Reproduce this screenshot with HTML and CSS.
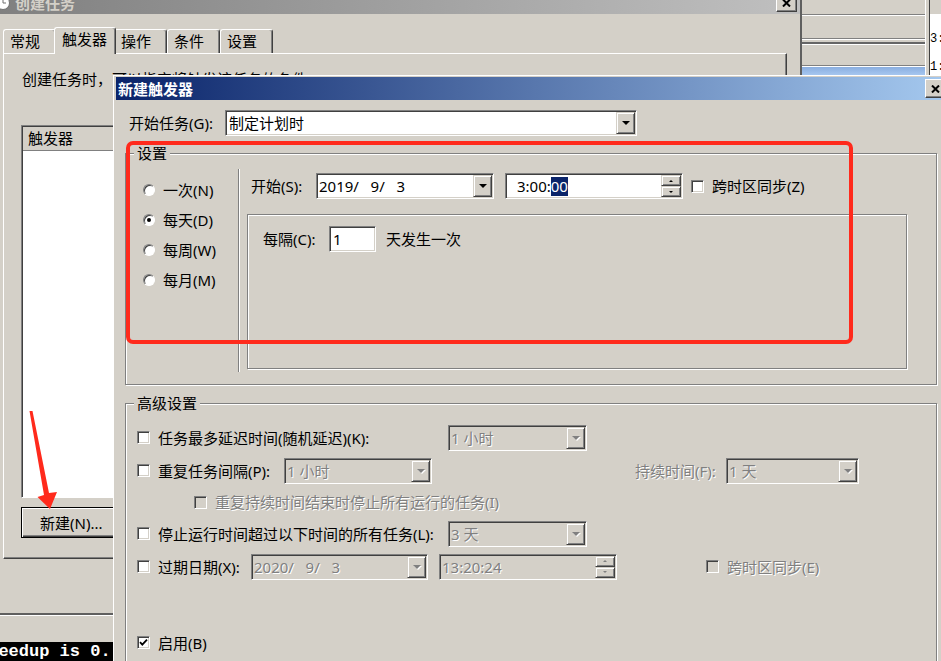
FILE: index.html
```html
<!DOCTYPE html>
<html lang="zh-CN">
<head>
    <meta charset="UTF-8">
    <meta name="viewport" content="width=device-width, initial-scale=1.0">
    <title>新建触发器</title>
    <link rel="stylesheet" href="styles.css">
</head>
<body>
<div class="desk">
    <div class="top-area">
        <!-- back window: 创建任务 -->
        <div class="task-win">
            <div class="win-title">
                <svg class="win-icon" width="16" height="16" viewBox="0 0 16 16">
                    <circle cx="8" cy="8" r="6.5" fill="#fff" stroke="#707070"/>
                    <path d="M8 4 V8 H11" stroke="#707070" fill="none"/>
                </svg>
                <span class="win-title-text">创建任务</span>
                <span class="cap-btn back-close">
                    <svg width="9" height="8" viewBox="0 0 9 8"><path d="M1 0.5 L8 7.5 M8 0.5 L1 7.5" stroke="#000" stroke-width="2"/></svg>
                </span>
            </div>
            <div class="tabs">
                <div class="tab">常规</div>
                <div class="tab on">触发器</div>
                <div class="tab">操作</div>
                <div class="tab">条件</div>
                <div class="tab">设置</div>
            </div>
            <div class="tab-panel">
                <div class="intro">创建任务时，可以指定将触发该任务的条件。</div>
                <div class="list">
                    <div class="list-head">触发器</div>
                </div>
                <div class="btn def new-btn">新建(N)...</div>
            </div>
        </div>

        <!-- window strip on the right -->
        <div class="side-win">
            <div class="side-list">
                <div class="sl-a"></div>
                <div class="sl-b"></div>
                <div class="sl-c"></div>
                <div class="sl-d"></div>
                <div class="sl-e"></div>
            </div>
            <div class="side-edge"></div>
            <div class="side-text">3:
1:</div>
        </div>
    </div>

    <div class="console">
        <div class="console-bar"></div>
        <div class="console-out">Speedup is 0.</div>
    </div>

    <!-- front dialog: 新建触发器 -->
    <div class="trig-win">
        <div class="trig-title">
            <span>新建触发器</span>
            <span class="cap-btn front-close">
                <svg width="9" height="8" viewBox="0 0 9 8"><path d="M1 0.5 L8 7.5 M8 0.5 L1 7.5" stroke="#000" stroke-width="2"/></svg>
            </span>
        </div>

        <div class="trig-body">
            <div class="start-row">
                <span class="lbl lbl-task">开始任务(G):</span>
                <div class="field task-combo">
                    <span class="val">制定计划时</span>
                    <span class="drop"><i class="arrow"></i></span>
                </div>
            </div>

            <div class="group group-set">
                <div class="legend">设置</div>
                <div class="sched">
                    <div class="radios">
                        <div class="radio-row"><span class="rad"></span><span>一次(N)</span></div>
                        <div class="radio-row"><span class="rad on"></span><span>每天(D)</span></div>
                        <div class="radio-row"><span class="rad"></span><span>每周(W)</span></div>
                        <div class="radio-row"><span class="rad"></span><span>每月(M)</span></div>
                    </div>
                    <div class="vsep"></div>
                    <div class="sched-main">
                        <div class="start-line">
                            <span class="lbl lbl-start">开始(S):</span>
                            <div class="field date">
                                <span class="val">2019/   9/   3</span>
                                <span class="drop"><i class="arrow"></i></span>
                            </div>
                            <div class="field time">
                                <span class="val hour-pad">3:00:<span class="sel">00</span></span>
                                <span class="spin">
                                    <span class="spin-b"><i class="up"></i></span>
                                    <span class="spin-b"><i class="down"></i></span>
                                </span>
                            </div>
                            <span class="chk gap-chk"></span>
                            <span class="lbl chk-lbl">跨时区同步(Z)</span>
                        </div>
                        <div class="group sub">
                            <div class="every-row">
                                <span class="lbl lbl-every">每隔(C):</span>
                                <div class="field num"><span class="val num-val">1</span></div>
                                <span class="lbl lbl-times">天发生一次</span>
                            </div>
                        </div>
                    </div>
                </div>
            </div>

            <div class="group group-adv">
                <div class="legend">高级设置</div>
                <div class="adv-rows">
                    <div class="adv-row">
                        <span class="chk"></span>
                        <span class="lbl chk-lbl lbl-long">任务最多延迟时间(随机延迟)(K):</span>
                        <div class="field off combo-s">
                            <span class="val">1 小时</span>
                            <span class="drop"><i class="arrow"></i></span>
                        </div>
                    </div>
                    <div class="adv-row">
                        <span class="chk"></span>
                        <span class="lbl chk-lbl lbl-repeat">重复任务间隔(P):</span>
                        <div class="field off combo-m">
                            <span class="val">1 小时</span>
                            <span class="drop"><i class="arrow"></i></span>
                        </div>
                        <span class="lbl off-text lbl-dur">持续时间(F):</span>
                        <div class="field off combo-d">
                            <span class="val">1 天</span>
                            <span class="drop"><i class="arrow"></i></span>
                        </div>
                    </div>
                    <div class="adv-row short">
                        <span class="chk off indent"></span>
                        <span class="lbl chk-lbl off-text">重复持续时间结束时停止所有运行的任务(I)</span>
                    </div>
                    <div class="adv-row">
                        <span class="chk"></span>
                        <span class="lbl chk-lbl lbl-long">停止运行时间超过以下时间的所有任务(L):</span>
                        <div class="field off combo-s">
                            <span class="val">3 天</span>
                            <span class="drop"><i class="arrow"></i></span>
                        </div>
                    </div>
                    <div class="adv-row">
                        <span class="chk"></span>
                        <span class="lbl chk-lbl lbl-expire">过期日期(X):</span>
                        <div class="field off date-off">
                            <span class="val">2020/   9/   3</span>
                            <span class="drop"><i class="arrow"></i></span>
                        </div>
                        <div class="field off time">
                            <span class="val">13:20:24</span>
                            <span class="spin">
                                <span class="spin-b"><i class="up"></i></span>
                                <span class="spin-b"><i class="down"></i></span>
                            </span>
                        </div>
                        <span class="chk off far-chk"></span>
                        <span class="lbl chk-lbl off-text">跨时区同步(E)</span>
                    </div>
                    <div class="adv-row last">
                        <span class="chk">
                            <svg width="9" height="9" viewBox="0 0 9 9"><path d="M1 4.2 L3.3 6.6 L8 1.6" stroke="#000" stroke-width="1.8" fill="none"/></svg>
                        </span>
                        <span class="lbl chk-lbl">启用(B)</span>
                    </div>
                </div>
            </div>
        </div>
    </div>

    <!-- annotations drawn on top of the screenshot -->
    <div class="mark-box"></div>
    <svg class="mark-arrow" width="70" height="120" viewBox="0 0 70 120">
        <polygon points="29.5,11 32.5,11 49,93 57,92 50,109 37.5,97 44,95" fill="#ff2a1c"/>
    </svg>
</div>
</body>
</html>
```

FILE: styles.css
```css
* {
    box-sizing: border-box;
}

html, body {
    margin: 0;
}

body {
    background-color: #d4d0c8;
    color: #000;
    font-family: "Noto Sans", "Noto Sans CJK SC", sans-serif;
    font-size: 15px;
    line-height: 18px;
}

.desk {
    position: relative;
    width: 941px;
    height: 661px;
    overflow: hidden;
}

.top-area {
    display: flex;
    height: 615px;
}

/* back window */
.task-win {
    flex: none;
    width: 802px;
    border-right: 2px solid #5f5f5f;
    border-bottom: 2px solid #5f5f5f;
}

.win-title {
    display: flex;
    align-items: center;
    height: 23px;
    margin-top: -9px;
    background: linear-gradient(to right, #808080, #c0c0c0);
    color: #d4d0c8;
    font-weight: bold;
}

.win-icon {
    margin-left: -5px;
    flex: none;
}

.win-title-text {
    margin-left: 4px;
}

.cap-btn {
    display: flex;
    align-items: center;
    justify-content: center;
    flex: none;
    width: 21px;
    height: 19px;
    margin-left: auto;
    background: #d4d0c8;
    border: 1px solid;
    border-color: #fff #404040 #404040 #fff;
    box-shadow: inset -1px -1px #808080;
}

.back-close {
    margin-right: 3px;
}

.front-close {
    margin-right: 7px;
}

.tabs {
    display: flex;
    align-items: flex-end;
    height: 26px;
    margin-top: 13px;
    padding-left: 3px;
}

.tab {
    height: 24px;
    padding: 0 15px 0 6px;
    border: 1px solid;
    border-bottom: none;
    border-color: #fff #404040 #fff #fff;
    border-radius: 3px 3px 0 0;
    box-shadow: inset -1px 0 #808080;
    line-height: 22px;
}

.tab.on {
    position: relative;
    z-index: 1;
    height: 27px;
    margin: 0 -2px -1px;
    padding: 0 8px 0 7px;
    background: #d4d0c8;
}

.tab-panel {
    width: 784px;
    height: 506px;
    margin-left: 3px;
    padding: 16px 16px 0 17px;
    border: 1px solid;
    border-color: #fff #404040 #404040 #fff;
    box-shadow: inset -1px -1px #808080;
}

.intro {
    margin-left: 1px;
    white-space: nowrap;
}

.list {
    height: 373px;
    margin-top: 37px;
    background: #fff;
    border: 1px solid;
    border-color: #808080 #fff #fff #808080;
    box-shadow: inset 1px 1px #404040;
}

.list-head {
    height: 24px;
    margin: 1px 0 0 1px;
    padding-left: 5px;
    background: #d4d0c8;
    border-bottom: 1px solid #808080;
    line-height: 23px;
}

.btn {
    display: flex;
    align-items: center;
    background: #d4d0c8;
    border: 1px solid;
    border-color: #fff #404040 #404040 #fff;
    box-shadow: inset -1px -1px #808080;
}

.btn.def {
    border-color: #000;
    box-shadow: inset 1px 1px #fff, inset -1px -1px #404040, inset -2px -2px #808080;
}

.new-btn {
    width: 101px;
    height: 31px;
    margin-top: 9px;
    padding-left: 18px;
}

/* window strip on the right */
.side-win {
    flex: 1;
    min-width: 0;
    display: flex;
}

.side-list {
    flex: none;
    width: 123px;
    display: flex;
    flex-direction: column;
}

.sl-a {
    height: 15px;
    border-bottom: 1px solid #808080;
}

.sl-b {
    height: 24px;
    border-top: 1px solid #fff;
    border-bottom: 1px solid #808080;
}

.sl-c {
    height: 5px;
    border-top: 1px solid #fff;
    border-bottom: 2px solid #666;
}

.sl-d {
    height: 22px;
    border-top: 1px solid #fff;
    border-bottom: 1px solid #808080;
}

.sl-e {
    flex: 1;
    border-top: 1px solid #fff;
    background: linear-gradient(#8aaee0, #a9c9f1 9px);
}

.side-edge {
    flex: none;
    width: 5px;
    border-left: 1px solid #fff;
    border-right: 1px solid #404040;
}

.side-text {
    flex: 1;
    min-width: 0;
    overflow: hidden;
    margin-top: 14px;
    padding-top: 11px;
    background: #fff;
    font-family: "Liberation Mono", monospace;
    font-size: 12px;
    line-height: 28px;
    white-space: pre;
}

.console {
    height: 46px;
    border-top: 1px solid #fff;
}

.console-bar {
    height: 26px;
}

.console-out {
    height: 19px;
    overflow: hidden;
    background: #000;
    color: #fff;
    font-family: "Liberation Mono", monospace;
    font-size: 17px;
    font-weight: bold;
    line-height: 19px;
    white-space: pre;
    text-indent: -22px;
}

/* front dialog */
.trig-win {
    position: absolute;
    left: 113px;
    top: 75px;
    width: 840px;
    height: 600px;
    padding: 1px 0 0 2px;
    background: #d4d0c8;
    border-left: 1px solid #fff;
    border-top: 1px solid #fff;
}

.trig-title {
    display: flex;
    align-items: center;
    height: 23px;
    padding-left: 2px;
    background: linear-gradient(to right, #0a246a, #a6caf0);
    color: #fff;
    font-weight: bold;
}

.trig-body {
    padding-left: 9px;
}

.lbl {
    flex: none;
    white-space: nowrap;
}

.off-text {
    color: #808080;
    text-shadow: 1px 1px 0 #fff;
}

.start-row {
    display: flex;
    align-items: center;
    height: 26px;
    margin-top: 10px;
}

.lbl-task {
    width: 96px;
    margin-left: 4px;
}

/* sunken edit / combo box */
.field {
    display: flex;
    align-items: center;
    flex: none;
    height: 26px;
    padding: 1px;
    background: #fff;
    border: 1px solid;
    border-color: #808080 #fff #fff #808080;
    box-shadow: inset 1px 1px #404040, inset -1px -1px #d4d0c8;
}

.field.off {
    background: #d4d0c8;
    color: #808080;
    text-shadow: 1px 1px 0 #fff;
}

.val {
    flex: 1;
    padding-left: 1px;
    overflow: hidden;
    white-space: pre;
}

.drop {
    display: flex;
    align-items: center;
    justify-content: center;
    width: 19px;
    align-self: stretch;
    background: #d4d0c8;
    border: 1px solid;
    border-color: #d4d0c8 #404040 #404040 #d4d0c8;
    box-shadow: inset 1px 1px #fff, inset -1px -1px #808080;
}

.arrow {
    width: 0;
    height: 0;
    border-left: 4px solid transparent;
    border-right: 4px solid transparent;
    border-top: 4px solid #000;
}

.off .arrow {
    border-top-color: #808080;
    filter: drop-shadow(1px 1px 0 #fff);
}

.spin {
    display: flex;
    flex-direction: column;
    width: 20px;
    align-self: stretch;
}

.spin-b {
    flex: 1;
    display: flex;
    align-items: center;
    justify-content: center;
    background: #d4d0c8;
    border: 1px solid;
    border-color: #d4d0c8 #404040 #404040 #d4d0c8;
    box-shadow: inset 1px 1px #fff, inset -1px -1px #808080;
}

.up {
    border-left: 2px solid transparent;
    border-right: 2px solid transparent;
    border-bottom: 2px solid #000;
}

.down {
    border-left: 2px solid transparent;
    border-right: 2px solid transparent;
    border-top: 2px solid #000;
}

.off .up {
    border-bottom-color: #808080;
}

.off .down {
    border-top-color: #808080;
}

.task-combo {
    width: 412px;
}

.task-combo .val {
    padding-left: 2px;
}

.sel {
    display: inline-block;
    background: #0a246a;
    color: #fff;
    line-height: 19px;
}

/* checkbox and radio */
.chk {
    display: flex;
    align-items: center;
    justify-content: center;
    flex: none;
    width: 13px;
    height: 13px;
    background: #fff;
    border: 1px solid;
    border-color: #808080 #fff #fff #808080;
    box-shadow: inset 1px 1px #404040, inset -1px -1px #d4d0c8;
}

.chk.off {
    background: #d4d0c8;
}

.chk-lbl {
    margin-left: 8px;
}

.rad {
    position: relative;
    flex: none;
    width: 12px;
    height: 12px;
    background: #fff;
    border: 1px solid;
    border-color: #808080 #fff #fff #808080;
    border-radius: 50%;
    box-shadow: inset 1px 1px #404040;
}

.rad.on::after {
    content: "";
    position: absolute;
    left: 3px;
    top: 3px;
    width: 4px;
    height: 4px;
    border-radius: 50%;
    background: #000;
}

/* group boxes */
.group {
    width: 812px;
    border: 1px solid #808080;
    box-shadow: inset 1px 1px #fff, 1px 1px #fff;
}

.legend {
    width: fit-content;
    margin: -10px 0 0 8px;
    padding: 0 3px;
    background: #d4d0c8;
    line-height: 18px;
}

.group-set {
    height: 232px;
    margin-top: 17px;
}

.group-adv {
    height: 300px;
    margin-top: 18px;
}

.sched {
    display: flex;
    margin-top: 7px;
}

.radios {
    width: 112px;
    padding: 6px 0 0 17px;
}

.radio-row {
    display: flex;
    align-items: center;
    gap: 8px;
    height: 30px;
}

.vsep {
    width: 2px;
    height: 203px;
    border-left: 1px solid #808080;
    border-right: 1px solid #fff;
}

.sched-main {
    padding: 4px 0 0 11px;
}

.start-line {
    display: flex;
    align-items: center;
    height: 26px;
}

.lbl-start {
    width: 65px;
}

.date {
    width: 178px;
}

.time {
    width: 178px;
    margin-left: 11px;
}

.hour-pad {
    padding-left: 10px;
}

.gap-chk {
    margin-left: 8px;
}

.group.sub {
    width: 660px;
    height: 155px;
    margin: 15px 0 0 -4px;
}

.every-row {
    display: flex;
    align-items: center;
    height: 26px;
    margin: 11px 0 0 15px;
}

.lbl-every {
    width: 66px;
}

.num {
    width: 47px;
}

.num-val {
    padding-left: 2px;
}

.lbl-times {
    margin-left: 10px;
}

/* advanced settings rows */
.adv-rows {
    padding: 9px 0 0 11px;
}

.adv-row {
    display: flex;
    align-items: center;
    height: 33px;
}

.adv-row.short {
    height: 30px;
}

.adv-row.last {
    margin-top: 43px;
}

.lbl-long {
    width: 290px;
}

.lbl-repeat {
    width: 126px;
}

.lbl-expire {
    width: 93px;
}

.combo-s {
    width: 139px;
}

.combo-m {
    width: 148px;
}

.combo-d {
    width: 133px;
}

.lbl-dur {
    width: 91px;
    margin-left: 203px;
}

.date-off {
    width: 177px;
}

.indent {
    margin-left: 57px;
}

.far-chk {
    margin-left: 89px;
}

/* red annotations */
.mark-box {
    position: absolute;
    left: 126px;
    top: 141px;
    width: 727px;
    height: 203px;
    border: 4px solid #ff2a1c;
    border-radius: 7px;
}

.mark-arrow {
    position: absolute;
    left: 0;
    top: 400px;
}
```
